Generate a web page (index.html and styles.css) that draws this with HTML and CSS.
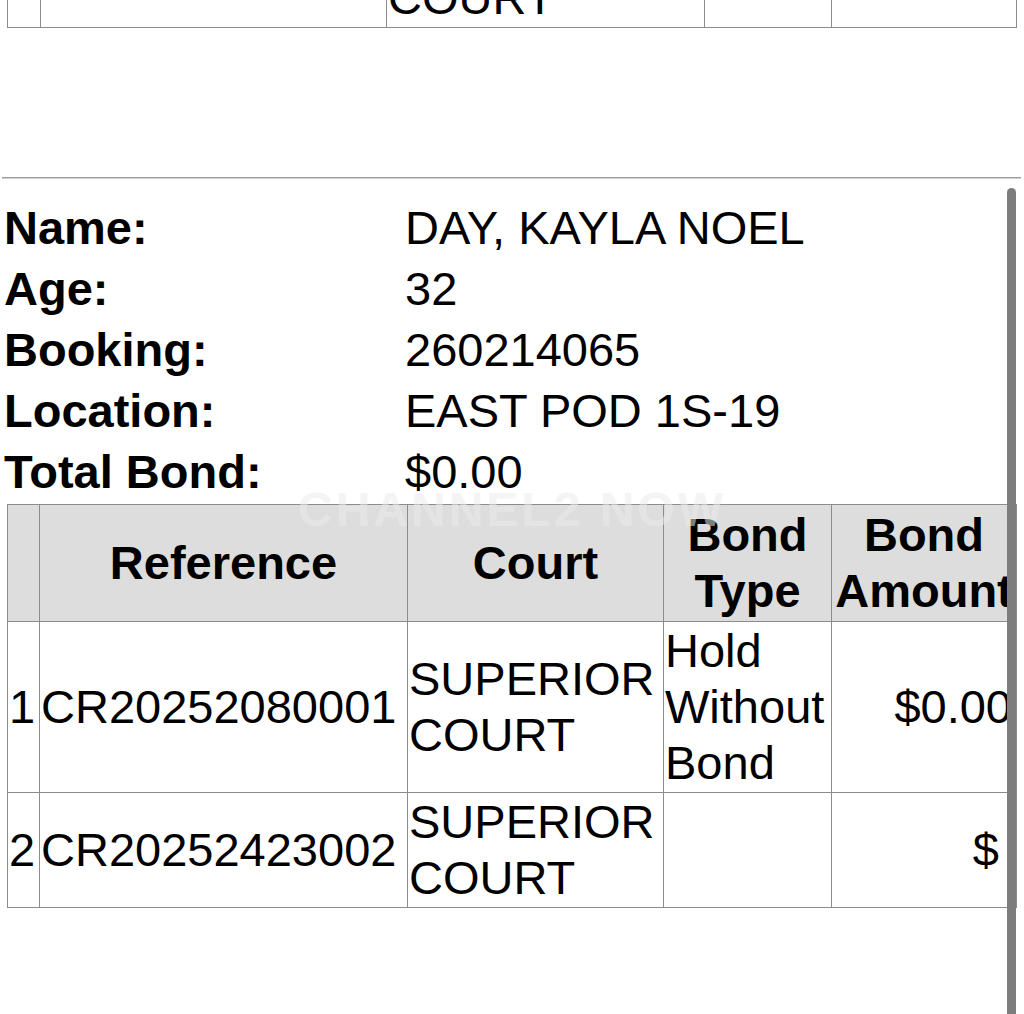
FILE: index.html
```html
<!DOCTYPE html>
<html lang="en">
<head>
<meta charset="utf-8">
<title>Inmate Record</title>
<link rel="stylesheet" href="styles.css">
</head>
<body>
<div class="prev">
  <table class="grid prev-table">
    <tr>
      <td class="p1"></td>
      <td class="p2"></td>
      <td class="p3">SUPERIOR<br>COURT</td>
      <td class="p4"></td>
      <td class="p5"></td>
    </tr>
  </table>
</div>

<div class="rule"></div>

<div class="info">
  <div class="label">Name:</div><div class="value">DAY, KAYLA NOEL</div>
  <div class="label">Age:</div><div class="value">32</div>
  <div class="label">Booking:</div><div class="value">260214065</div>
  <div class="label">Location:</div><div class="value">EAST POD 1S-19</div>
  <div class="label">Total Bond:</div><div class="value">$0.00</div>
</div>

<table class="grid charges">
  <thead>
    <tr>
      <th class="c1"></th>
      <th class="c2">Reference</th>
      <th class="c3">Court</th>
      <th class="c4">Bond Type</th>
      <th class="c5">Bond Amount</th>
    </tr>
  </thead>
  <tbody>
    <tr>
      <td>1</td>
      <td>CR20252080001</td>
      <td>SUPERIOR COURT</td>
      <td>Hold Without Bond</td>
      <td class="amt">$0.00</td>
    </tr>
    <tr>
      <td>2</td>
      <td>CR20252423002</td>
      <td>SUPERIOR COURT</td>
      <td></td>
      <td class="amt">$&nbsp;</td>
    </tr>
  </tbody>
</table>

<div class="watermark">CHANNEL2 NOW</div>
<div class="scrollbar"></div>
</body>
</html>
```

FILE: styles.css
```css
html, body {
  margin: 0;
  padding: 0;
  background: #ffffff;
}

body {
  position: relative;
  min-height: 1014px;
  font-family: "Liberation Sans", Arial, Helvetica, sans-serif;
  font-size: 47px;
  line-height: 56px;
  color: #000000;
}

/* tail of the previous record's table, scrolled mostly out of view */
.prev {
  height: 28px;
  overflow: hidden;
  display: flex;
  flex-direction: column;
  justify-content: flex-end;
}

.grid {
  border-collapse: separate;
  border-spacing: 0;
  table-layout: fixed;
  width: 1010px;
  margin-left: 7px;
  border-left: 1px solid #8c8c8c;
  border-top: 1px solid #8c8c8c;
}

.grid td,
.grid th {
  box-sizing: border-box;
  border-right: 1px solid #8c8c8c;
  border-bottom: 1px solid #8c8c8c;
  padding: 1px;
  vertical-align: middle;
  text-align: left;
  font-weight: normal;
  overflow: visible;
  white-space: normal;
}

.prev-table .p1 { width: 33px; }
.prev-table .p2 { width: 346px; }
.prev-table .p3 { width: 318px; }
.prev-table .p4 { width: 127px; }
.prev-table .p5 { width: 185px; }

.rule {
  margin: 149px 3px 0 2px;
  border-top: 1px solid #9c9c9c;
  border-bottom: 1px solid #cfcfcf;
}

.info {
  display: grid;
  grid-template-columns: 401px 1fr;
  grid-auto-rows: 61px;
  line-height: 61px;
  margin-top: 18px;
  padding-left: 4px;
}

.info + .charges {
  margin-top: 2px;
}

.label {
  font-weight: bold;
}

.charges th {
  background: #dddddd;
  font-weight: bold;
  text-align: center;
  padding: 2px 1px;
}

.charges .c1 { width: 32px; }
.charges .c2 { width: 368px; }
.charges .c3 { width: 256px; }
.charges .c4 { width: 168px; }
.charges .c5 { width: 185px; padding: 2px 0; }

.charges td.amt {
  text-align: right;
  padding-right: 4px;
}

.watermark {
  position: absolute;
  left: 298px;
  top: 487px;
  font-size: 48px;
  line-height: 46px;
  font-weight: bold;
  letter-spacing: 3px;
  color: rgba(236, 236, 236, 0.55);
  pointer-events: none;
  white-space: nowrap;
}

.scrollbar {
  position: absolute;
  left: 1007px;
  top: 188px;
  width: 9px;
  height: 826px;
  background: #7d7d7d;
  border-radius: 5px 5px 0 0;
}
```
